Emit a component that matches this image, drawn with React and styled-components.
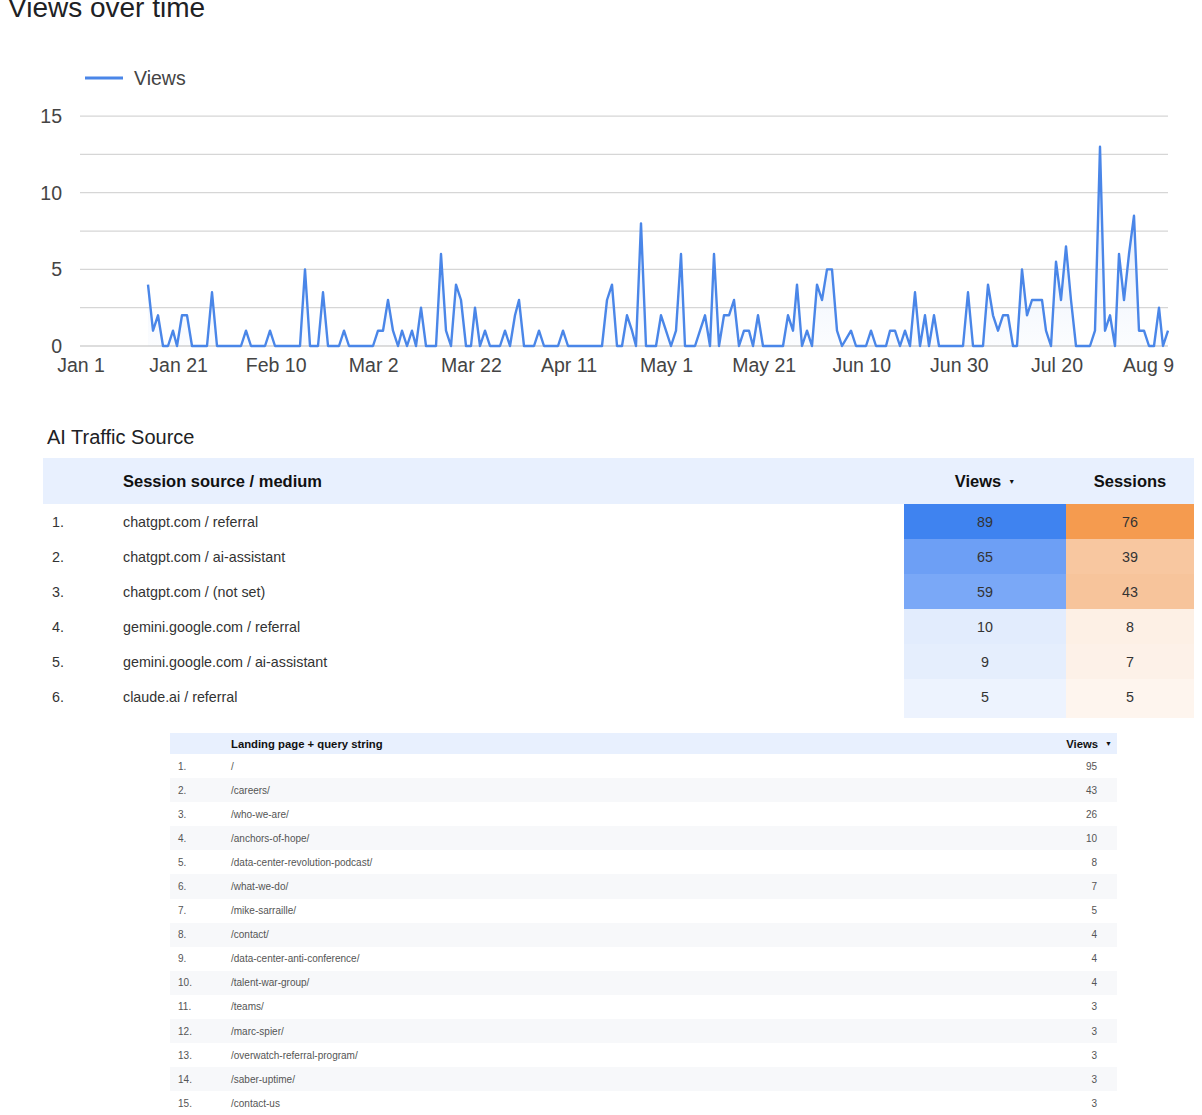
import React from 'react';
import styled, { createGlobalStyle } from 'styled-components';

const Global = createGlobalStyle`
  body { margin: 0; background: #fff; font-family: "Liberation Sans", Arial, sans-serif; overflow: hidden; }
`;

const Page = styled.div`
  width: 1202px;
  height: 1115px;
  overflow: hidden;
`;

const ChartTitle = styled.h1`
  margin: -7px 0 0 8px;
  height: 28px;
  font-size: 28px;
  line-height: 30px;
  font-weight: 400;
  color: #202124;
`;

const ChartSvg = styled.svg`
  display: block;
`;

const SectionTitle = styled.h2`
  margin: 34px 0 9px 47px;
  font-size: 20px;
  line-height: 24px;
  font-weight: 400;
  color: #202124;
`;

const SourceTable = styled.div`
  margin-left: 43px;
  width: 1151px;
  display: grid;
  grid-template-columns: 80px 1fr 162px 128px;
  color: #333;
`;

const HeadCell = styled.div`
  height: 46px;
  background: #e8f0fe;
  display: flex;
  align-items: center;
  justify-content: ${p => (p.$center ? 'center' : 'flex-start')};
  font-size: 16.5px;
  font-weight: 700;
  color: #111;
`;

const Cell = styled.div`
  height: ${p => (p.$last ? 39 : 35)}px;
  padding-bottom: ${p => (p.$last ? 4 : 0)}px;
  box-sizing: border-box;
  display: flex;
  align-items: center;
  justify-content: ${p => (p.$center ? 'center' : 'flex-start')};
  padding-left: ${p => (p.$num ? 9 : 0)}px;
  font-size: 14.3px;
  background: ${p => p.$bg || '#fff'};
`;

const Arrow = styled.span`
  font-size: 7px;
  margin-left: 7px;
`;

const PageTable = styled.div`
  margin: 15px 0 0 170px;
  width: 947px;
  display: grid;
  grid-template-columns: 61px 1fr 120px;
  color: #555;
  font-size: 10px;
`;

const PageHead = styled.div`
  height: 21px;
  background: #e8f0fe;
  display: flex;
  align-items: center;
  justify-content: ${p => (p.$right ? 'flex-end' : 'flex-start')};
  padding-right: ${p => (p.$right ? 5 : 0)}px;
  font-size: 11.3px;
  font-weight: 700;
  color: #111;
`;

const PageCell = styled.div`
  height: 24.1px;
  display: flex;
  align-items: center;
  justify-content: ${p => (p.$right ? 'flex-end' : 'flex-start')};
  padding-left: ${p => (p.$num ? 8 : 0)}px;
  padding-right: ${p => (p.$right ? 20 : 0)}px;
  background: ${p => (p.$odd ? '#f7f8fa' : '#fff')};
`;

const pts = [
  [148,4],[153,1],[158,2],[163,0],[168,0],[173,1],[177,0],[182,2],[187,2],[192,0],[207,0],[212,3.5],[217,0],
  [241,0],[246,1],[251,0],[265,0],[270,1],[275,0],[300,0],[305,5],[310,0],[318,0],[323,3.5],[328,0],[339,0],[344,1],[349,0],
  [373,0],[378,1],[383,1],[388,3],[393,1],[398,0],[402,1],[407,0],[412,1],[416,0],[421,2.5],[426,0],[436,0],[441,6],[446,1],
  [451,0],[456,4],[461,3],[466,0],[471,0],[475,2.5],[480,0],[485,1],[490,0],[500,0],[505,1],[510,0],[515,2],[519,3],[524,0],
  [534,0],[539,1],[544,0],[558,0],[563,1],[568,0],[602,0],[607,3],[612,4],[617,0],[622,0],[627,2],[632,1],[636,0],[641,8],
  [646,0],[656,0],[661,2],[666,1],[671,0],[676,1],[681,6],[685,0],[695,0],[700,1],[705,2],[710,0],[714,6],[719,0],[724,2],
  [729,2],[734,3],[739,0],[744,1],[749,1],[753,0],[758,2],[763,0],[783,0],[788,2],[793,1],[797,4],[802,0],[807,1],[812,0],
  [817,4],[822,3],[827,5],[832,5],[837,1],[842,0],[851,1],[856,0],[866,0],[871,1],[876,0],[886,0],[890,1],[895,1],[900,0],
  [905,1],[910,0],[915,3.5],[920,0],[925,2],[929,0],[934,2],[939,0],[963,0],[968,3.5],[973,0],[983,0],[988,4],[993,2],
  [998,1],[1003,2],[1008,2],[1013,0],[1017,0],[1022,5],[1027,2],[1032,3],[1037,3],[1042,3],[1046,1],[1051,0],[1056,5.5],
  [1061,3],[1066,6.5],[1071,3],[1076,0],[1090,0],[1095,1],[1100,13],[1105,1],[1110,2],[1115,0],[1119,6],[1124,3],[1129,6],
  [1134,8.5],[1139,1],[1144,1],[1149,0],[1154,0],[1159,2.5],[1163,0],[1168,1],
];
const yOf = v => 346 - v * 15.33;
const line = pts.map(([x, v]) => `${x},${yOf(v).toFixed(1)}`).join(' ');
const area = `148,346 ${line} 1168,346`;

const grid = [0, 2.5, 5, 7.5, 10, 12.5, 15];
const dates = ['Jan 1', 'Jan 21', 'Feb 10', 'Mar 2', 'Mar 22', 'Apr 11', 'May 1', 'May 21', 'Jun 10', 'Jun 30', 'Jul 20', 'Aug 9'];
const font = 'Liberation Sans, Arial, sans-serif';

function Chart() {
  return (
    <ChartSvg width="1202" height="370" viewBox="0 21 1202 370">
      <defs>
        <linearGradient id="fill" x1="0" y1="0" x2="0" y2="1">
          <stop offset="0" stopColor="#4a86e8" stopOpacity="0.18" />
          <stop offset="1" stopColor="#4a86e8" stopOpacity="0.02" />
        </linearGradient>
      </defs>
      <line x1="85" y1="78" x2="123" y2="78" stroke="#4a86e8" strokeWidth="3" />
      <text x="134" y="85" fontSize="19.5" fill="#444" fontFamily={font}>Views</text>
      {grid.map(g => (
        <line key={g} x1="80" x2="1168" y1={yOf(g)} y2={yOf(g)} stroke={g === 0 ? '#bbb' : '#d6d6d6'} strokeWidth="1.2" />
      ))}
      {[0, 5, 10, 15].map(g => (
        <text key={g} x="62" y={yOf(g) + 7} fontSize="19.5" fill="#444" textAnchor="end" fontFamily={font}>{g}</text>
      ))}
      {dates.map((d, i) => (
        <text key={d} x={81 + i * 97.6 + (i === 11 ? -6 : 0)} y="372" fontSize="19.5" fill="#444" textAnchor="middle" fontFamily={font}>{d}</text>
      ))}
      <polygon points={area} fill="url(#fill)" />
      <polyline points={line} fill="none" stroke="#4a86e8" strokeWidth="2.4" strokeLinejoin="round" />
    </ChartSvg>
  );
}

const sources = [
  ['chatgpt.com / referral', 89, 76, '#3f83f0', '#f59b4f'],
  ['chatgpt.com / ai-assistant', 65, 39, '#6d9ff5', '#f8c7a0'],
  ['chatgpt.com / (not set)', 59, 43, '#7aa8f7', '#f7c49b'],
  ['gemini.google.com / referral', 10, 8, '#e2ecfd', '#fdf0e5'],
  ['gemini.google.com / ai-assistant', 9, 7, '#e5eefd', '#fdf1e8'],
  ['claude.ai / referral', 5, 5, '#edf3fe', '#fef5ee'],
];

const pages = [
  ['/', 95], ['/careers/', 43], ['/who-we-are/', 26], ['/anchors-of-hope/', 10],
  ['/data-center-revolution-podcast/', 8], ['/what-we-do/', 7], ['/mike-sarraille/', 5],
  ['/contact/', 4], ['/data-center-anti-conference/', 4], ['/talent-war-group/', 4],
  ['/teams/', 3], ['/marc-spier/', 3], ['/overwatch-referral-program/', 3],
  ['/saber-uptime/', 3], ['/contact-us', 3],
];

export default function App() {
  return (
    <Page>
      <Global />
      <ChartTitle>Views over time</ChartTitle>
      <Chart />
      <SectionTitle>AI Traffic Source</SectionTitle>
      <SourceTable>
        <HeadCell />
        <HeadCell>Session source / medium</HeadCell>
        <HeadCell $center>Views<Arrow>▼</Arrow></HeadCell>
        <HeadCell $center>Sessions</HeadCell>
        {sources.map(([name, v, s, vb, sb], i) => {
          const last = i === sources.length - 1;
          return (
            <React.Fragment key={name}>
              <Cell $num $last={last}>{i + 1}.</Cell>
              <Cell $last={last}>{name}</Cell>
              <Cell $center $last={last} $bg={vb}>{v}</Cell>
              <Cell $center $last={last} $bg={sb}>{s}</Cell>
            </React.Fragment>
          );
        })}
      </SourceTable>
      <PageTable>
        <PageHead />
        <PageHead>Landing page + query string</PageHead>
        <PageHead $right>Views<Arrow>▼</Arrow></PageHead>
        {pages.map(([p, v], i) => (
          <React.Fragment key={p}>
            <PageCell $num $odd={i % 2 === 1}>{i + 1}.</PageCell>
            <PageCell $odd={i % 2 === 1}>{p}</PageCell>
            <PageCell $right $odd={i % 2 === 1}>{v}</PageCell>
          </React.Fragment>
        ))}
      </PageTable>
    </Page>
  );
}
